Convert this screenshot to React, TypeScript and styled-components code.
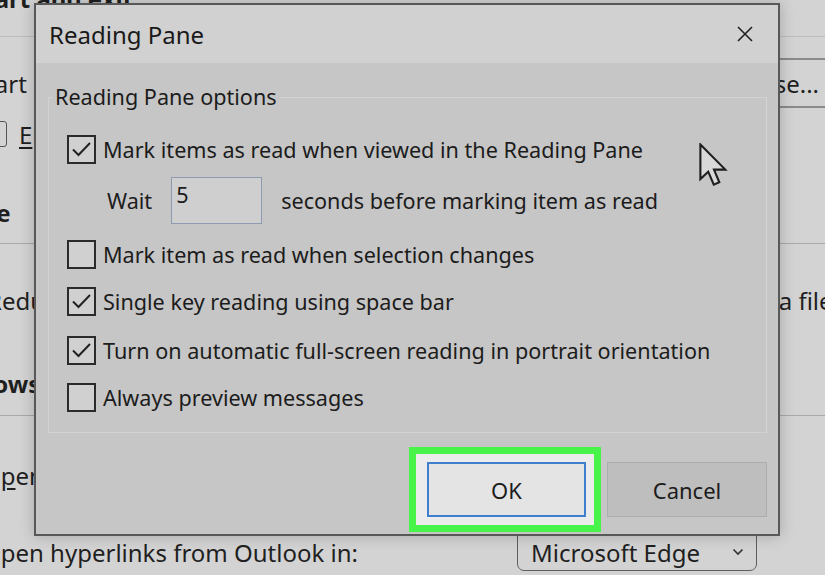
import React from 'react'
import styled, { createGlobalStyle } from 'styled-components'

const GlobalStyle = createGlobalStyle`
  html, body {
    margin: 0;
    padding: 0;
    background: #d3d3d3;
  }
  body {
    font-family: "Noto Sans", "Open Sans", sans-serif;
    color: #1d1d1d;
  }
`

const Page = styled.div`
  position: relative;
  width: 825px;
  height: 575px;
  overflow: hidden;
  background: #d3d3d3;
`

/* the Outlook options page behind the dialog */

const Backdrop = styled.div`
  display: flex;
  flex-direction: column;
  font-size: 24px;
  color: #1f1f1f;
`

const Section = styled.div<{ $height: number; $lineColor?: string }>`
  display: flex;
  flex-direction: column;
  height: ${p => p.$height}px;
  border-bottom: 1px solid ${p => p.$lineColor || '#a9a9a9'};
`

const Line = styled.div<{ $top: number; $height?: number }>`
  display: flex;
  align-items: center;
  height: ${p => p.$height || 28}px;
  margin-top: ${p => p.$top}px;
  white-space: nowrap;
`

const Cut = styled.span<{ $cut: number; $bold?: boolean }>`
  margin-left: -${p => p.$cut}px;
  font-weight: ${p => (p.$bold ? 700 : 400)};
`

const Key = styled.span`
  text-decoration: underline;
  text-underline-offset: 3px;
`

const BackBox = styled.span`
  flex: none;
  width: 24px;
  height: 24px;
  margin-left: -19px;
  margin-right: 12px;
  border: 1.5px solid #555;
  border-radius: 3px;
`

const Browse = styled.div`
  display: flex;
  align-items: center;
  justify-content: flex-end;
  height: 100%;
  box-sizing: border-box;
  width: 140px;
  margin-left: auto;
  margin-right: -10px;
  padding-right: 16px;
  border-top: 2px solid #8a8a8a;
  border-bottom: 2px solid #8a8a8a;
`

const RightText = styled.span`
  margin-left: auto;
  margin-right: -14px;
`

const Dropdown = styled.div`
  display: flex;
  align-items: center;
  justify-content: space-between;
  box-sizing: border-box;
  width: 240px;
  height: 38px;
  margin-left: auto;
  margin-right: 68px;
  padding: 0 12px 0 13px;
  border: 1.5px solid #5e5e5e;
  border-radius: 0 0 7px 7px;
  font-size: 24px;
`

/* the dialog */

const Dialog = styled.div`
  position: absolute;
  left: 34px;
  top: 3px;
  width: 746px;
  height: 533px;
  box-sizing: border-box;
  display: flex;
  flex-direction: column;
  background: #c6c6c6;
  border: 2px solid #585858;
  box-shadow: 0 0 14px rgba(0, 0, 0, 0.22);
`

const TitleBar = styled.div`
  display: flex;
  align-items: center;
  justify-content: space-between;
  height: 58px;
  padding: 0 25px 0 13px;
  background: #d1d1d1;
`

const Title = styled.span`
  font-size: 24px;
  color: #1a1a1a;
`

const Body = styled.div`
  display: flex;
  flex-direction: column;
  padding: 0 11px 0 12px;
  font-size: 21.6px;
`

const Group = styled.fieldset`
  margin: 19px 0 0;
  padding: 0 0 21px;
  border: 1px solid #d2d2d2;
  border-right-color: #d6d6d6;
  display: flex;
  flex-direction: column;
`

const Legend = styled.legend`
  margin-left: 3px;
  padding: 0 3px;
  line-height: 30px;
  color: #1c1c1c;
`

const Option = styled.label<{ $top: number }>`
  display: flex;
  align-items: center;
  height: 28px;
  margin: ${p => p.$top}px 0 0 18px;
  color: #1c1c1c;
  white-space: nowrap;
`

const Box = styled.span`
  flex: none;
  display: flex;
  align-items: center;
  justify-content: center;
  box-sizing: border-box;
  width: 29px;
  height: 29px;
  margin-right: 7px;
  background: #d0d0d0;
  border: 2px solid #2a2a2a;
`

const WaitRow = styled.div`
  display: flex;
  align-items: center;
  gap: 19px;
  margin: 14px 0 0 58px;
  color: #1c1c1c;
  white-space: nowrap;
`

const Seconds = styled.div`
  box-sizing: border-box;
  width: 91px;
  height: 47px;
  padding: 2px 0 0 4px;
  background: #cfcfcf;
  border: 1.5px solid #8e9bb0;
  line-height: 30px;
`

const Buttons = styled.div`
  display: flex;
  justify-content: flex-end;
  gap: 21px;
  margin-top: 29px;
`

const Button = styled.button<{ $primary?: boolean }>`
  position: relative;
  width: ${p => (p.$primary ? 159 : 160)}px;
  height: 55px;
  font-family: inherit;
  font-size: 22px;
  color: #1c1c1c;
  background: ${p => (p.$primary ? '#e4e4e4' : '#bebebe')};
  border: ${p => (p.$primary ? '2px solid #3f7fce' : '1px solid #adadad')};
  z-index: 1;
`

const HighlightWrap = styled.div`
  position: relative;
  display: flex;
`

const Highlight = styled.span`
  position: absolute;
  left: -18px;
  right: -15px;
  top: -15px;
  bottom: -15px;
  border: 7px solid #48f44a;
  background: #ececec;
`

const Cursor = styled.svg`
  position: absolute;
  left: 699px;
  top: 143px;
`

const Check = () => (
  <svg width='25' height='25' viewBox='0 0 25 25'>
    <polyline points='4,12.5 9.5,18 21,6' fill='none' stroke='#222' strokeWidth='2' />
  </svg>
)

const CheckOption: React.FC<{ checked?: boolean; top: number; children: React.ReactNode }> = ({ checked, top, children }) => (
  <Option $top={top}>
    <Box>{checked && <Check />}</Box>
    {children}
  </Option>
)

export default function App () {
  return (
    <Page>
      <GlobalStyle />
      <Backdrop>
        <Section $height={36} $lineColor='#bcbcbc'>
          <Line $top={-17} $height={30}>
            <Cut $cut={29} $bold>Start and exit</Cut>
          </Line>
        </Section>
        <Section $height={206}>
          <Line $top={21} $height={50}>
            <Cut $cut={27}>Start Outlook in this folder:</Cut>
            <Browse>Browse...</Browse>
          </Line>
          <Line $top={12}>
            <BackBox />
            <span><Key>E</Key>mpty Deleted Items folders when exiting Outlook</span>
          </Line>
          <Line $top={50}>
            <Cut $cut={137} $bold>AutoArchive</Cut>
          </Line>
        </Section>
        <Section $height={171}>
          <Line $top={42}>
            <Cut $cut={13}>Reduce mailbox size</Cut>
            <RightText>a file.</RightText>
          </Line>
          <Line $top={55}>
            <Cut $cut={68} $bold>Windows</Cut>
          </Line>
        </Section>
        <Section $height={159} $lineColor='transparent'>
          <Line $top={45}>
            <Cut $cut={18}>O<Key>p</Key>en attachments in:</Cut>
          </Line>
          <Line $top={44} $height={38}>
            <Cut $cut={18}>Open hyperlinks from Outlook in:</Cut>
            <Dropdown>
              Microsoft Edge
              <svg width='12' height='8' viewBox='0 0 12 8'>
                <polyline points='1.5,1.5 6,6 10.5,1.5' fill='none' stroke='#333' strokeWidth='1.6' />
              </svg>
            </Dropdown>
          </Line>
        </Section>
      </Backdrop>

      <Dialog>
        <TitleBar>
          <Title>Reading Pane</Title>
          <svg width='16' height='16' viewBox='0 0 16 16'>
            <path d='M1 1 L15 15 M15 1 L1 15' stroke='#222' strokeWidth='1.6' />
          </svg>
        </TitleBar>
        <Body>
          <Group>
            <Legend>Reading Pane options</Legend>
            <CheckOption checked top={23}>Mark items as read when viewed in the Reading Pane</CheckOption>
            <WaitRow>
              <span>Wait</span>
              <Seconds>5</Seconds>
              <span>seconds before marking item as read</span>
            </WaitRow>
            <CheckOption top={16}>Mark item as read when selection changes</CheckOption>
            <CheckOption checked top={19}>Single key reading using space bar</CheckOption>
            <CheckOption checked top={21}>Turn on automatic full-screen reading in portrait orientation</CheckOption>
            <CheckOption top={19}>Always preview messages</CheckOption>
          </Group>
          <Buttons>
            <HighlightWrap>
              <Highlight />
              <Button $primary>OK</Button>
            </HighlightWrap>
            <Button>Cancel</Button>
          </Buttons>
        </Body>
      </Dialog>

      <Cursor width='30' height='44' viewBox='0 0 13 19'>
        <path d='M0.6 0.6 L0.6 15.6 L4 12.4 L6.4 18 L8.8 17 L6.5 11.5 L11.4 11.5 Z' fill='#d9d9d9' stroke='#1e1e1e' strokeWidth='0.9' strokeLinejoin='miter' />
      </Cursor>
    </Page>
  )
}
